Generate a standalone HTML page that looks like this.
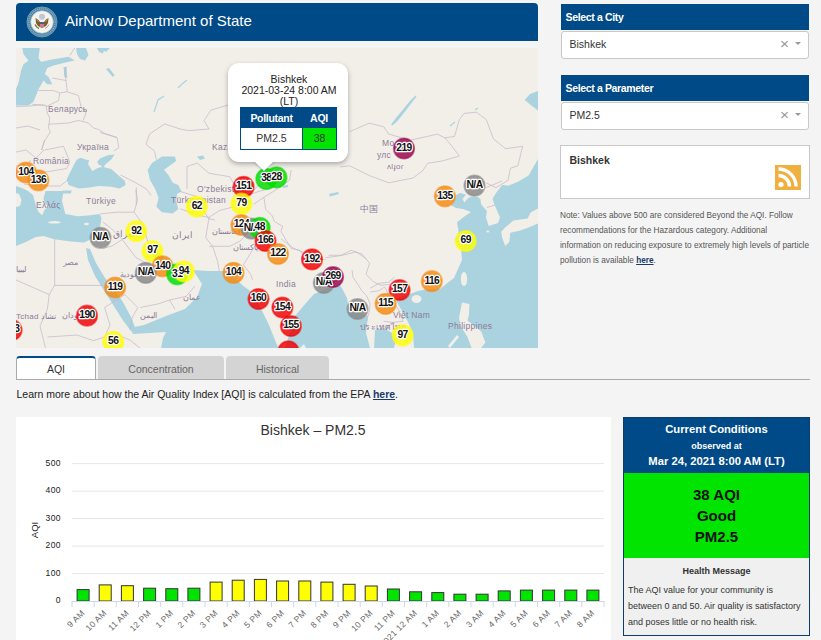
<!DOCTYPE html>
<html><head><meta charset="utf-8">
<style>
*{box-sizing:border-box;margin:0;padding:0}
html,body{width:821px;height:640px;overflow:hidden;background:#f4f4f4;font-family:"Liberation Sans",sans-serif;color:#333}
.abs{position:absolute}
#hdr{left:16px;top:3px;width:522px;height:38px;background:#004a87;border-radius:4px 4px 0 0}
#hdr .t{left:49px;top:9px;font-size:15px;color:#fff;white-space:nowrap;line-height:18px}
#map{left:16px;top:48px;width:522px;height:300px;background:#f2efe9;overflow:hidden}
.sh{left:561px;width:248px;height:26px;background:#004a87;color:#fff;font-weight:bold;font-size:10.5px;line-height:26px;padding-left:4.5px;letter-spacing:-0.35px}
.sel{left:561px;width:248px;height:28px;background:#fff;border:1px solid #c8c8c8;border-radius:3px;font-size:10.5px;line-height:25px;padding-left:7.5px;color:#333}
.sel .x{position:absolute;left:218px;top:-1.5px;color:#999;font-size:15.5px}
.sel .c{position:absolute;left:232.5px;top:10px;width:0;height:0;border-left:3.5px solid transparent;border-right:3.5px solid transparent;border-top:3.5px solid #999}
#cityinfo{left:560px;top:145px;width:250px;height:54px;background:#fff;border:1px solid #c8c8c8}
#note{left:560px;top:207.5px;width:252px;font-size:8.25px;line-height:15px;color:#555}
.tab{top:356px;height:23px;background:#d4d4d4;border-radius:4px 4px 0 0;font-size:10.5px;line-height:26px;text-align:center;color:#666}
#learn{left:16.5px;top:387.5px;font-size:10.5px;color:#222;white-space:nowrap}
#chart{left:16px;top:417px;width:595px;height:223px;background:#fff}
#cond{left:623px;top:417px;width:187px;height:219px;background:#f0f0f0;border:1px solid #0c3d6e}
.mk{font-family:"Liberation Sans",sans-serif;font-weight:bold;font-size:10.3px;fill:#111;letter-spacing:-0.6px;paint-order:stroke;stroke:#fff;stroke-width:2.4px;stroke-linejoin:round}
#popup{left:212px;top:15px;width:120px;height:110px}
.yl{font-family:"Liberation Sans",sans-serif;font-size:8.6px;fill:#222;letter-spacing:0.4px}
.xl{font-family:"Liberation Sans",sans-serif;font-size:8.5px;fill:#666;letter-spacing:0.3px}
</style></head><body>
<div id="hdr" class="abs">
  <svg class="abs" style="left:10px;top:3px" width="32" height="32" viewBox="0 0 32 32">
    <circle cx="16" cy="16" r="15" fill="#4f80b0" stroke="#78aaa4" stroke-width="0.9"/>
    <circle cx="16" cy="16" r="13.2" fill="none" stroke="#8fb4c8" stroke-width="1.2" stroke-dasharray="1.2 0.9"/>
    <circle cx="16" cy="16" r="11.3" fill="#f5f3ee" stroke="#a9c2bc" stroke-width="0.7"/>
    <circle cx="16" cy="10.8" r="3" fill="#b9cad8"/>
    <path d="M9.5,12 L12,13.5 L14,16 L16,16.5 L18,16 L20,13.5 L22.5,12 L22,17 L20,20 L16,22 L12,20 L10,17 Z" fill="#7a5c30"/>
    <path d="M10.5,13 L12.5,16 M21.5,13 L19.5,16" stroke="#c0a060" stroke-width="0.8"/>
    <path d="M9,18.5 Q10.5,21.5 13,22.5" stroke="#5a8a4a" stroke-width="1.5" fill="none"/>
    <path d="M23,18.5 Q21.5,21.5 19,22.5" stroke="#9a9a8a" stroke-width="0.9" fill="none"/>
    <rect x="14" y="16.2" width="4" height="1.8" fill="#3c5c9c"/>
    <path d="M14,18 L18,18 L18,20.5 Q16,22.5 14,20.5 Z" fill="#d77a80"/>
  </svg>
  <div class="abs t">AirNow Department of State</div>
</div>

<div id="map" class="abs"><svg class="abs" style="left:0;top:0" width="522" height="300" viewBox="16 48 522 300"><path d="M22.25,48 L39.75,48 L38.5,58 L41,61.75 L53.5,59.25 L68.5,56.75 L74.75,60.5 L68.5,61.75 L53.5,65.5 L47.25,68 L44.75,74.25 L48.5,76.75 L52.25,84.25 L47.25,84.25 L43.5,80.5 L38.5,89.25 L33.5,101.75 L28.5,105.5 L16,105.5 L16,89.25 L18.5,83 L21,70.5 L23.5,64.25 L28.5,60.5 L23.5,54.25 Z" fill="#aad3df"/>
<path d="M63.5,67 L66.5,66.75 L67.25,78 L64.5,77 Z" fill="#aad3df"/>
<path d="M76,48 L86,48 L88.5,55 L85,60.5 L80,59 L77,54 Z" fill="#aad3df"/>
<path d="M100,48 L110,48 L106,52 Z" fill="#aad3df"/>
<path d="M80.5,157.8 L85.6,159.5 L90,160.5 L96,162 L100,164 L104.3,167.2 L111.2,168.9 L119.7,176.5 L124.8,180.8 L125.6,185 L119.7,188.5 L111.2,186.8 L98.4,185.9 L89.8,187.6 L78.8,188.5 L68.5,185 L66.8,179.1 L71.1,170.6 L74.5,163.8 L77,159.5 Z" fill="#aad3df"/>
<path d="M97,162 L100,158.6 L107.7,155.2 L114.6,154.4 L111.2,159.5 L105.2,164.6 L103.5,167.5 L100,165.5 Z" fill="#aad3df"/>
<path d="M62.8,190.5 L71.6,190.5 L71,193.4 L63,193.4 Z" fill="#aad3df"/>
<path d="M161.9,156.6 L175,156.6 L176,161 L171.7,164.2 L164,169.7 L168.4,175.1 L172.8,182.8 L178.3,185 L181.5,191.5 L177.2,193.7 L176,200.3 L178.3,209 L172.8,213.4 L161.9,212.3 L156.4,206.8 L158.6,198 L155.3,189.3 L149.8,179.5 L147.7,169.7 L152,163.1 L158.6,158.7 Z" fill="#aad3df"/>
<path d="M16,186 L22,188 L28,191 L33,195 L36,206 L38.5,212 L42.3,215.2 L44.5,209.7 L48.9,206.4 L45.6,204 L43.4,198.8 L45.6,191 L63.5,191 L62,201 L65.3,214.1 L77.4,216.3 L90.6,215.2 L99.3,214.1 L101.5,217.4 L100.4,225 L99.3,231.7 L92.8,238.2 L84,242.6 L70.8,241.5 L54.4,239.3 L43.4,236 L35.7,237.1 L27,241.5 L16,246 Z" fill="#aad3df"/>
<path d="M86,248 L90,249 L96,263 L105,278 L116,291 L124,304 L131,317 L135,327 L131,331 L122,319 L112,303 L103,289 L95,276 L88,260 Z" fill="#aad3df"/>
<path d="M150,250 L158,252 L168,262 L178,266 L190,268 L193,272 L186,276 L176,276 L166,272 L156,262 Z" fill="#aad3df"/>
<path d="M193,270 L208,271 L223,271 L236,279 L243.3,285.9 L251.9,292 L261.6,310 L269,325 L276.2,343 L278.7,348 L161,348 L163,338 L166,332 L150,333 L133,334 L130,328 L144,325 L166,316 L185,309 L197,297 L202,284 Z" fill="#aad3df"/>
<path d="M285,348 L290,332 L295,316 L306,303 L314,294 L331,287 L340,285 L344,292 L347,298 L349,309 L360,313 L368,316 L366,333 L370,348 Z" fill="#aad3df"/>
<path d="M375,330 L384,328 L392,333 L396,340 L394,348 L374,348 Z" fill="#aad3df"/>
<path d="M396,300 L403,313 L408,322 L413,333 L414,348 L538,348 L538,159 L528.6,175.5 L518.5,181.6 L508.3,185.7 L502.2,185 L496,193 L492.5,198.7 L494.4,204.4 L500,217.5 L498,223 L488.7,226 L486,217.5 L486.9,211 L481.2,204.4 L480.3,198.7 L477.5,196.9 L472,196.5 L468.1,198 L464.4,202.5 L462.5,199 L466,194.5 L460,193 L455,195.5 L451.2,205.3 L456,208 L463,209 L471,211.9 L465,216 L457,222.2 L458.7,232.5 L455,240 L461,248 L462,260 L454,278 L446,284 L440,289 L428,289 L418,291 L410,294 L398,298 Z" fill="#aad3df"/>
<path d="M97,48 L104.6,48 L103,53.5 L99,52 Z" fill="#aad3df"/>
<path d="M106,69 L109,68 L114.75,75.5 L112.5,76.75 Z" fill="#aad3df"/>
<path d="M197,156.5 L203,155.5 L205,158.5 L200,160 Z" fill="#aad3df"/>
<path d="M329,194 L338,192 L339,194 L330,196.5 Z" fill="#aad3df"/>
<path d="M283,186 L288,185 L288,187 L283,188 Z" fill="#aad3df"/>
<path d="M524.6,100 L530,94 L538,91 L538,110.5 L532,106 Z" fill="#aad3df"/>
<path d="M391,124.5 L396,118 L403,109.5 L410,101 L415.5,95.5 L416.5,96.5 L411.5,103 L405,111.5 L398,120.5 L392.5,125.5 Z" fill="#aad3df"/>
<path d="M538,208.4 L530.6,212.4 L527.6,218.5 L513.4,220.5 L505.2,227.6 L501.2,231.7 L502.2,237.8 L505.2,246 L509.3,241.9 L510.3,232.7 L519.4,230.7 L528.6,227.6 L538,223.6 Z" fill="#f2efe9"/>
<path d="M462,302.6 L469.5,304 L468.9,315 L467.5,320.5 L474.4,326 L481.2,331.5 L485.4,342.5 L481,348 L471.6,348 L467.5,337 L460.6,326 L459,317.7 L460.6,309.5 Z M448,346 L457,335 L459,337 L450,348 Z" fill="#f2efe9"/>
<path d="M300,348 L304,344 L306,348 Z" fill="#f2efe9"/>
<path d="M88,164 L89.5,159.5 L96,160 L98.5,164.5 L102.5,166.6 L96.7,168.6 L92.4,171 Z" fill="#f2efe9"/>
<path d="M16,193 L19,194 L21.5,200 L20,206 L16,207 Z" fill="#f2efe9"/>
<ellipse cx="416.5" cy="299" rx="5" ry="4" fill="#f2efe9"/>
<ellipse cx="464" cy="279" rx="3.2" ry="7" fill="#f2efe9"/>
<ellipse cx="54.4" cy="222.3" rx="6.5" ry="1.3" fill="#f2efe9"/>
<ellipse cx="86.5" cy="224" rx="2.5" ry="1.2" fill="#f2efe9"/>
<ellipse cx="487.8" cy="231.5" rx="1.5" ry="1" fill="#f2efe9"/>
<path d="M154,112 L156,106 L158,100 L164,96" fill="none" stroke="#aad3df" stroke-width="1.2"/>
<path d="M178,88 L182,84 L187,80" fill="none" stroke="#aad3df" stroke-width="1.2"/>
<path d="M450,126 L455,122" fill="none" stroke="#aad3df" stroke-width="1.2"/>
<path d="M475,110 L478,108" fill="none" stroke="#aad3df" stroke-width="1.2"/>
<path d="M74.75,48 L69.75,55.5" fill="none" stroke="#c4b5c6" stroke-width="0.7"/>
<path d="M52.25,78 L66,80.5" fill="none" stroke="#c4b5c6" stroke-width="0.7"/>
<path d="M66,66.75 L64.75,73 L66,80.5" fill="none" stroke="#c4b5c6" stroke-width="0.7"/>
<path d="M38.5,90.5 L53.5,90.5 L59.75,93 L67.25,91.75" fill="none" stroke="#c4b5c6" stroke-width="0.7"/>
<path d="M66,80.5 L67.25,91.75 L78.5,95.5 L81,106.75 L86,113 L83,120.8" fill="none" stroke="#c4b5c6" stroke-width="0.7"/>
<path d="M59.75,93 L58.5,100.5 L46,106.75" fill="none" stroke="#c4b5c6" stroke-width="0.7"/>
<path d="M32.25,104.25 L46,105.5 L47.25,113 L49.75,118 L48.5,128 L50.3,132 L44.3,141.4 L41.7,150" fill="none" stroke="#c4b5c6" stroke-width="0.7"/>
<path d="M48.5,124.25 L68.5,123 L78.5,120.5 L88.5,123 L93.5,128 L98.4,129.4 L104.7,133.5 L117,137.5 L118.8,147.7 L113.6,151.2" fill="none" stroke="#c4b5c6" stroke-width="0.7"/>
<path d="M16,106.6 L30,106 L38,105 L44.5,105" fill="none" stroke="#c4b5c6" stroke-width="0.7"/>
<path d="M16,128 L28,126 L40,130" fill="none" stroke="#c4b5c6" stroke-width="0.7"/>
<path d="M41.7,150 L44.5,140" fill="none" stroke="#c4b5c6" stroke-width="0.7"/>
<path d="M44.5,150 L63.5,146.3 L69.8,162 L66.7,168.5" fill="none" stroke="#c4b5c6" stroke-width="0.7"/>
<path d="M16,152 L26,150 L36,158 L44,150" fill="none" stroke="#c4b5c6" stroke-width="0.7"/>
<path d="M16,166 L24,164" fill="none" stroke="#c4b5c6" stroke-width="0.7"/>
<path d="M16,172 L30,172 L47.7,171.7 L66.7,168.5" fill="none" stroke="#c4b5c6" stroke-width="0.7"/>
<path d="M30,160 L30,172" fill="none" stroke="#c4b5c6" stroke-width="0.7"/>
<path d="M38,186 L60.3,186 L68.3,179.6" fill="none" stroke="#c4b5c6" stroke-width="0.7"/>
<path d="M24,184 L38,186" fill="none" stroke="#c4b5c6" stroke-width="0.7"/>
<path d="M120.5,175 L134.1,181.9 L146,188.7 L151.2,195.5" fill="none" stroke="#c4b5c6" stroke-width="0.7"/>
<path d="M136.3,187.5 L136.3,205" fill="none" stroke="#c4b5c6" stroke-width="0.7"/>
<path d="M100,213.9 L117,212.2 L134.1,212.2" fill="none" stroke="#c4b5c6" stroke-width="0.7"/>
<path d="M135.8,190 L137.5,200.2 L134.1,212.2 L142.6,224.1 L147.7,241.2 L156.3,251.4" fill="none" stroke="#c4b5c6" stroke-width="0.7"/>
<path d="M102.7,222 L110.2,227.5 L122.2,239.5 L136,257.7 L146,263" fill="none" stroke="#c4b5c6" stroke-width="0.7"/>
<path d="M102.7,248.5 L112,246 L122.2,239.5" fill="none" stroke="#c4b5c6" stroke-width="0.7"/>
<path d="M54.7,239 L54.7,285.4 L102.7,285.4" fill="none" stroke="#c4b5c6" stroke-width="0.7"/>
<path d="M16,280 L49.2,294.6 L54.7,285.4" fill="none" stroke="#c4b5c6" stroke-width="0.7"/>
<path d="M49.2,294.6 L47.4,309.3 L40,326 L45.5,348" fill="none" stroke="#c4b5c6" stroke-width="0.7"/>
<path d="M47.4,337 L77,335 L93.5,340.7 L104.6,337" fill="none" stroke="#c4b5c6" stroke-width="0.7"/>
<path d="M104.6,307.5 L124.9,294.6 L137.8,307.5" fill="none" stroke="#c4b5c6" stroke-width="0.7"/>
<path d="M104.6,337 L110,325 L104.6,307.5" fill="none" stroke="#c4b5c6" stroke-width="0.7"/>
<path d="M137.8,307.5 L132,318 L130,330" fill="none" stroke="#c4b5c6" stroke-width="0.7"/>
<path d="M120,336 L130,340 L140,348" fill="none" stroke="#c4b5c6" stroke-width="0.7"/>
<path d="M140,307.5 L158.5,303.8 L169.5,300 L186,296.4" fill="none" stroke="#c4b5c6" stroke-width="0.7"/>
<path d="M169.5,300 L175,309.3" fill="none" stroke="#c4b5c6" stroke-width="0.7"/>
<path d="M186,296.4 L195,286" fill="none" stroke="#c4b5c6" stroke-width="0.7"/>
<path d="M156.3,159.7 L154.6,151.2 L146,144.3 L149.5,134.1 L164.8,123.9 L180.1,129 L188.7,130.7 L209,129 L204,120.5 L210.8,110.2 L227.9,105.1 L232,104" fill="none" stroke="#c4b5c6" stroke-width="0.7"/>
<path d="M100,132.4 L117,137.5" fill="none" stroke="#c4b5c6" stroke-width="0.7"/>
<path d="M187,166.5 L197.2,163.1 L209.1,173.3 L229.6,176.7 L235.6,186" fill="none" stroke="#c4b5c6" stroke-width="0.7"/>
<path d="M187,166.5 L187,188.7" fill="none" stroke="#c4b5c6" stroke-width="0.7"/>
<path d="M179.2,191.2 L196.3,196.3 L208.3,218.5 L215,220" fill="none" stroke="#c4b5c6" stroke-width="0.7"/>
<path d="M180.1,208.8 L198.9,215.6 L209.1,217.3" fill="none" stroke="#c4b5c6" stroke-width="0.7"/>
<path d="M235.6,186 L249,194.6 L259.5,191.2 L280,186" fill="none" stroke="#c4b5c6" stroke-width="0.7"/>
<path d="M249,194.6 L259.5,184.4 L280,182.7" fill="none" stroke="#c4b5c6" stroke-width="0.7"/>
<path d="M209.1,217.3 L205.7,237.7 L212.6,246.3 L217.7,261.6 L219.4,271.9" fill="none" stroke="#c4b5c6" stroke-width="0.7"/>
<path d="M209.1,246.3 L229.6,246.3 L240,241.2" fill="none" stroke="#c4b5c6" stroke-width="0.7"/>
<path d="M209.1,217.3 L219.4,210.5 L233,207" fill="none" stroke="#c4b5c6" stroke-width="0.7"/>
<path d="M240,241.2 L250.7,230 L258,241 L243.3,265 L250.7,274.3 L252.5,279.8" fill="none" stroke="#c4b5c6" stroke-width="0.7"/>
<path d="M291.2,170 L289.5,180.2 L277.5,188.8 L263.9,197.3 L253.6,204.1" fill="none" stroke="#c4b5c6" stroke-width="0.7"/>
<path d="M263.9,197.3 L265.6,209.2 L272.4,216 L274.1,221.2 L282.6,226.3 L281,231.4 L286,240 L291.2,248.4 L299.7,250.2 L304.8,257" fill="none" stroke="#c4b5c6" stroke-width="0.7"/>
<path d="M281,239 L294,248.5 L321.7,259.5 L325.4,259.5" fill="none" stroke="#c4b5c6" stroke-width="0.7"/>
<path d="M304.8,257 L320,258" fill="none" stroke="#c4b5c6" stroke-width="0.7"/>
<path d="M325.4,257.7 L340,255.8 L351,250.3 L362,254 L369.6,263.2 L366,274.3 L373.3,281.7 L380.7,285.4 L395.5,283.5" fill="none" stroke="#c4b5c6" stroke-width="0.7"/>
<path d="M328.7,255.3 L342.3,255.3 L356,251.9 L366.2,258.7" fill="none" stroke="#c4b5c6" stroke-width="0.7"/>
<path d="M352,270 L353,277.3 L358,284.6 L361.7,290.7 L366.5,295.6 L370.2,304.1 L369,312.6 L366.5,321.2" fill="none" stroke="#c4b5c6" stroke-width="0.7"/>
<path d="M370.2,292 L378.7,290.7 L384.8,287 L388.5,294.4 L398.2,309 L403,321.2" fill="none" stroke="#c4b5c6" stroke-width="0.7"/>
<path d="M383.6,321.2 L393.3,322.4 L403,321.2" fill="none" stroke="#c4b5c6" stroke-width="0.7"/>
<path d="M370.2,288.3 L378.7,283.4 L388.5,282.2 L394.6,277.3" fill="none" stroke="#c4b5c6" stroke-width="0.7"/>
<path d="M349.7,131.7 L369.2,123.1 L383.8,126.8 L388.7,134.1 L410.6,140.2 L437.4,134.1 L444.8,137.8 L454.5,136.5" fill="none" stroke="#c4b5c6" stroke-width="0.7"/>
<path d="M340,167 L349.7,165.8 L369.2,175.5 L388.7,182.8 L413,178 L422.8,170.6 L427.7,163.3 L442.3,160.9 L459.4,156 L452,146.3 L444.8,137.8" fill="none" stroke="#c4b5c6" stroke-width="0.7"/>
<path d="M454.5,136.5 L459.4,119.5 L464.2,113.4 L476.4,112.2 L486.2,119.5 L493.5,139 L505.6,148.7 L522.7,146.3 L517.8,165.8 L510.5,168.2 L508,180.4 L495.9,187.7 L486.2,182.8" fill="none" stroke="#c4b5c6" stroke-width="0.7"/>
<path d="M478,190 L486,187.5 L495,184 L502,181" fill="none" stroke="#c4b5c6" stroke-width="0.7"/>
<path d="M487,207.5 L495,205" fill="none" stroke="#c4b5c6" stroke-width="0.7"/>
<text x="48" y="112" font-size="8.5" fill="#8c7b97" font-family="Liberation Sans" letter-spacing="0.3">Беларусь</text>
<text x="77" y="150" font-size="8.5" fill="#8c7b97" font-family="Liberation Sans" letter-spacing="0.3">Україна</text>
<text x="33" y="164" font-size="8.5" fill="#8c7b97" font-family="Liberation Sans" letter-spacing="0.3">România</text>
<text x="86" y="204" font-size="8.5" fill="#8c7b97" font-family="Liberation Sans" letter-spacing="0.3">Türkiye</text>
<text x="36" y="208" font-size="8.5" fill="#8c7b97" font-family="Liberation Sans" letter-spacing="0.3">Ελλάς</text>
<text x="212" y="150" font-size="8.5" fill="#8c7b97" font-family="Liberation Sans" letter-spacing="0.3">Kaza</text>
<text x="197" y="192" font-size="8.5" fill="#8c7b97" font-family="Liberation Sans" letter-spacing="0.3">O'zbekiston</text>
<text x="171" y="203" font-size="8.5" fill="#8c7b97" font-family="Liberation Sans" letter-spacing="0.3">Türkmenistan</text>
<text x="172" y="238" font-size="8.5" fill="#8c7b97" font-family="Liberation Sans" letter-spacing="0.3">ایران</text>
<text x="113" y="237" font-size="8.5" fill="#8c7b97" font-family="Liberation Sans" letter-spacing="0.3">العراق</text>
<text x="63" y="265" font-size="8" fill="#8c7b97" font-family="Liberation Sans" letter-spacing="0.3">مصر</text>
<text x="16" y="272" font-size="8" fill="#8c7b97" font-family="Liberation Sans" letter-spacing="0.3">ليبيا</text>
<text x="62" y="318" font-size="8" fill="#8c7b97" font-family="Liberation Sans" letter-spacing="0.3">السودان</text>
<text x="16" y="319" font-size="8" fill="#8c7b97" font-family="Liberation Sans" letter-spacing="0.3">Tchad تشاد</text>
<text x="140" y="318" font-size="8" fill="#8c7b97" font-family="Liberation Sans" letter-spacing="0.3">اليمن</text>
<text x="183" y="300" font-size="8" fill="#8c7b97" font-family="Liberation Sans" letter-spacing="0.3">عمان</text>
<text x="120" y="277" font-size="8" fill="#8c7b97" font-family="Liberation Sans" letter-spacing="0.3">السعودية</text>
<text x="212" y="234" font-size="8" fill="#8c7b97" font-family="Liberation Sans" letter-spacing="0.3">افغانستان</text>
<text x="233" y="250" font-size="8" fill="#8c7b97" font-family="Liberation Sans" letter-spacing="0.3">پاکستان</text>
<text x="276" y="287" font-size="8.5" fill="#8c7b97" font-family="Liberation Sans" letter-spacing="0.3">India</text>
<text x="359.5" y="212" font-size="8.5" fill="#8c7b97" font-family="Liberation Sans" letter-spacing="0.3">中国</text>
<text x="382" y="146" font-size="8.5" fill="#8c7b97" font-family="Liberation Sans" letter-spacing="0.3">Mo</text>
<text x="377" y="158" font-size="8.5" fill="#8c7b97" font-family="Liberation Sans" letter-spacing="0.3">улс</text>
<text x="387" y="168.5" font-size="8" fill="#8c7b97" font-family="Liberation Sans" letter-spacing="0.3">ʌlɟoɾ</text>
<text x="393" y="318" font-size="8.5" fill="#8c7b97" font-family="Liberation Sans" letter-spacing="0.3">Việt Nam</text>
<text x="360" y="330" font-size="8.5" fill="#8c7b97" font-family="Liberation Sans" letter-spacing="0.3">ประเทศไทย</text>
<text x="448" y="329" font-size="8.5" fill="#8c7b97" font-family="Liberation Sans" letter-spacing="0.3">Philippines</text>
<circle cx="11.6" cy="330" r="10.3" fill="#f00000" fill-opacity="0.82" stroke="#f00000" stroke-opacity="0.55" stroke-width="1.6"/>
<circle cx="26" cy="172.5" r="10.3" fill="#f58a10" fill-opacity="0.82" stroke="#f58a10" stroke-opacity="0.55" stroke-width="1.6"/>
<circle cx="38.4" cy="180.3" r="10.3" fill="#f58a10" fill-opacity="0.82" stroke="#f58a10" stroke-opacity="0.55" stroke-width="1.6"/>
<circle cx="100.5" cy="237.8" r="10.3" fill="#888888" fill-opacity="0.82" stroke="#888888" stroke-opacity="0.55" stroke-width="1.6"/>
<circle cx="136.3" cy="231.2" r="10.3" fill="#ffff00" fill-opacity="0.82" stroke="#ffff00" stroke-opacity="0.55" stroke-width="1.6"/>
<circle cx="115.1" cy="287.5" r="10.3" fill="#f58a10" fill-opacity="0.82" stroke="#f58a10" stroke-opacity="0.55" stroke-width="1.6"/>
<circle cx="87" cy="315.7" r="10.3" fill="#f00000" fill-opacity="0.82" stroke="#f00000" stroke-opacity="0.55" stroke-width="1.6"/>
<circle cx="113.2" cy="341.9" r="10.3" fill="#ffff00" fill-opacity="0.82" stroke="#ffff00" stroke-opacity="0.55" stroke-width="1.6"/>
<circle cx="152.4" cy="251" r="10.3" fill="#ffff00" fill-opacity="0.82" stroke="#ffff00" stroke-opacity="0.55" stroke-width="1.6"/>
<circle cx="162.6" cy="266.3" r="10.3" fill="#f58a10" fill-opacity="0.82" stroke="#f58a10" stroke-opacity="0.55" stroke-width="1.6"/>
<circle cx="145.8" cy="272.9" r="10.3" fill="#888888" fill-opacity="0.82" stroke="#888888" stroke-opacity="0.55" stroke-width="1.6"/>
<circle cx="177.2" cy="274.3" r="10.3" fill="#00dd00" fill-opacity="0.82" stroke="#00dd00" stroke-opacity="0.55" stroke-width="1.6"/>
<circle cx="183.8" cy="271.4" r="10.3" fill="#ffff00" fill-opacity="0.82" stroke="#ffff00" stroke-opacity="0.55" stroke-width="1.6"/>
<circle cx="196.8" cy="206.7" r="10.3" fill="#ffff00" fill-opacity="0.82" stroke="#ffff00" stroke-opacity="0.55" stroke-width="1.6"/>
<circle cx="243.6" cy="186.9" r="10.3" fill="#f00000" fill-opacity="0.82" stroke="#f00000" stroke-opacity="0.55" stroke-width="1.6"/>
<circle cx="241.4" cy="203.7" r="10.3" fill="#ffff00" fill-opacity="0.82" stroke="#ffff00" stroke-opacity="0.55" stroke-width="1.6"/>
<circle cx="266.3" cy="178.9" r="10.3" fill="#00dd00" fill-opacity="0.82" stroke="#00dd00" stroke-opacity="0.55" stroke-width="1.6"/>
<circle cx="276.5" cy="177.4" r="10.3" fill="#00dd00" fill-opacity="0.82" stroke="#00dd00" stroke-opacity="0.55" stroke-width="1.6"/>
<circle cx="241.4" cy="225" r="10.3" fill="#f58a10" fill-opacity="0.82" stroke="#f58a10" stroke-opacity="0.55" stroke-width="1.6"/>
<circle cx="251.6" cy="228.6" r="10.3" fill="#888888" fill-opacity="0.82" stroke="#888888" stroke-opacity="0.55" stroke-width="1.6"/>
<circle cx="259.7" cy="227.9" r="10.3" fill="#00dd00" fill-opacity="0.82" stroke="#00dd00" stroke-opacity="0.55" stroke-width="1.6"/>
<circle cx="265.5" cy="241" r="10.3" fill="#f00000" fill-opacity="0.82" stroke="#f00000" stroke-opacity="0.55" stroke-width="1.6"/>
<circle cx="278" cy="254" r="10.3" fill="#f58a10" fill-opacity="0.82" stroke="#f58a10" stroke-opacity="0.55" stroke-width="1.6"/>
<circle cx="233.5" cy="272.9" r="10.3" fill="#f58a10" fill-opacity="0.82" stroke="#f58a10" stroke-opacity="0.55" stroke-width="1.6"/>
<circle cx="312" cy="259.4" r="10.3" fill="#f00000" fill-opacity="0.82" stroke="#f00000" stroke-opacity="0.55" stroke-width="1.6"/>
<circle cx="323.8" cy="283" r="10.3" fill="#888888" fill-opacity="0.82" stroke="#888888" stroke-opacity="0.55" stroke-width="1.6"/>
<circle cx="333" cy="277" r="10.3" fill="#99004c" fill-opacity="0.82" stroke="#99004c" stroke-opacity="0.55" stroke-width="1.6"/>
<circle cx="258.5" cy="299" r="10.3" fill="#f00000" fill-opacity="0.82" stroke="#f00000" stroke-opacity="0.55" stroke-width="1.6"/>
<circle cx="282.4" cy="307.5" r="10.3" fill="#f00000" fill-opacity="0.82" stroke="#f00000" stroke-opacity="0.55" stroke-width="1.6"/>
<circle cx="290.9" cy="326" r="10.3" fill="#f00000" fill-opacity="0.82" stroke="#f00000" stroke-opacity="0.55" stroke-width="1.6"/>
<circle cx="288.4" cy="351.4" r="10.3" fill="#f00000" fill-opacity="0.82" stroke="#f00000" stroke-opacity="0.55" stroke-width="1.6"/>
<circle cx="404" cy="148.5" r="10.3" fill="#99004c" fill-opacity="0.82" stroke="#99004c" stroke-opacity="0.55" stroke-width="1.6"/>
<circle cx="474.5" cy="185.6" r="10.3" fill="#888888" fill-opacity="0.82" stroke="#888888" stroke-opacity="0.55" stroke-width="1.6"/>
<circle cx="444.9" cy="196.3" r="10.3" fill="#f58a10" fill-opacity="0.82" stroke="#f58a10" stroke-opacity="0.55" stroke-width="1.6"/>
<circle cx="465.7" cy="241" r="10.3" fill="#ffff00" fill-opacity="0.82" stroke="#ffff00" stroke-opacity="0.55" stroke-width="1.6"/>
<circle cx="399.6" cy="290" r="10.3" fill="#f00000" fill-opacity="0.82" stroke="#f00000" stroke-opacity="0.55" stroke-width="1.6"/>
<circle cx="431.8" cy="281.2" r="10.3" fill="#f58a10" fill-opacity="0.82" stroke="#f58a10" stroke-opacity="0.55" stroke-width="1.6"/>
<circle cx="385.6" cy="303.9" r="10.3" fill="#f58a10" fill-opacity="0.82" stroke="#f58a10" stroke-opacity="0.55" stroke-width="1.6"/>
<circle cx="357.5" cy="309" r="10.3" fill="#888888" fill-opacity="0.82" stroke="#888888" stroke-opacity="0.55" stroke-width="1.6"/>
<circle cx="402.6" cy="335.3" r="10.3" fill="#ffff00" fill-opacity="0.82" stroke="#ffff00" stroke-opacity="0.55" stroke-width="1.6"/>
<text x="11.6" y="332.4" text-anchor="middle" class="mk">183</text>
<text x="26" y="174.9" text-anchor="middle" class="mk">104</text>
<text x="38.4" y="182.70000000000002" text-anchor="middle" class="mk">136</text>
<text x="100.5" y="240.20000000000002" text-anchor="middle" class="mk">N/A</text>
<text x="136.3" y="233.6" text-anchor="middle" class="mk">92</text>
<text x="115.1" y="289.9" text-anchor="middle" class="mk">119</text>
<text x="87" y="318.09999999999997" text-anchor="middle" class="mk">190</text>
<text x="113.2" y="344.29999999999995" text-anchor="middle" class="mk">56</text>
<text x="152.4" y="253.4" text-anchor="middle" class="mk">97</text>
<text x="162.6" y="268.7" text-anchor="middle" class="mk">140</text>
<text x="145.8" y="275.29999999999995" text-anchor="middle" class="mk">N/A</text>
<text x="177.2" y="276.7" text-anchor="middle" class="mk">31</text>
<text x="183.8" y="273.79999999999995" text-anchor="middle" class="mk">94</text>
<text x="196.8" y="209.1" text-anchor="middle" class="mk">62</text>
<text x="243.6" y="189.3" text-anchor="middle" class="mk">151</text>
<text x="241.4" y="206.1" text-anchor="middle" class="mk">79</text>
<text x="266.3" y="181.3" text-anchor="middle" class="mk">38</text>
<text x="276.5" y="179.8" text-anchor="middle" class="mk">28</text>
<text x="241.4" y="227.4" text-anchor="middle" class="mk">124</text>
<text x="251.6" y="231.0" text-anchor="middle" class="mk">N/A</text>
<text x="259.7" y="230.3" text-anchor="middle" class="mk">48</text>
<text x="265.5" y="243.4" text-anchor="middle" class="mk">166</text>
<text x="278" y="256.4" text-anchor="middle" class="mk">122</text>
<text x="233.5" y="275.29999999999995" text-anchor="middle" class="mk">104</text>
<text x="312" y="261.79999999999995" text-anchor="middle" class="mk">192</text>
<text x="323.8" y="285.4" text-anchor="middle" class="mk">N/A</text>
<text x="333" y="279.4" text-anchor="middle" class="mk">269</text>
<text x="258.5" y="301.4" text-anchor="middle" class="mk">160</text>
<text x="282.4" y="309.9" text-anchor="middle" class="mk">154</text>
<text x="290.9" y="328.4" text-anchor="middle" class="mk">155</text>
<text x="404" y="150.9" text-anchor="middle" class="mk">219</text>
<text x="474.5" y="188.0" text-anchor="middle" class="mk">N/A</text>
<text x="444.9" y="198.70000000000002" text-anchor="middle" class="mk">135</text>
<text x="465.7" y="243.4" text-anchor="middle" class="mk">69</text>
<text x="399.6" y="292.4" text-anchor="middle" class="mk">157</text>
<text x="431.8" y="283.59999999999997" text-anchor="middle" class="mk">116</text>
<text x="385.6" y="306.29999999999995" text-anchor="middle" class="mk">115</text>
<text x="357.5" y="311.4" text-anchor="middle" class="mk">N/A</text>
<text x="402.6" y="337.7" text-anchor="middle" class="mk">97</text></svg><div class="abs" id="popup">
<div class="abs" style="left:0;top:0;width:120px;height:99px;background:#fff;border-radius:11px;box-shadow:0 2px 5px rgba(0,0,0,0.3)"></div>
<svg class="abs" style="left:23.75px;top:98px;overflow:visible" width="24" height="12"><path d="M2,0 L12,10 L22,0 Z" fill="#fff" style="filter:drop-shadow(0 1px 1px rgba(0,0,0,0.25))"/><rect x="0" y="-3" width="24" height="3" fill="#fff"/></svg>
<div class="abs" style="left:1px;top:11px;width:120px;text-align:center;font-size:10.5px;line-height:11px;color:#222">Bishkek<br>2021-03-24 8:00 AM<br>(LT)</div>
<div class="abs" style="left:12px;top:44px;width:97px;height:43px;border:1px solid #004a87;background:#fff">
 <div class="abs" style="left:0;top:0;width:95px;height:20px;background:#004a87"></div>
 <div class="abs" style="left:0;top:0;width:61px;line-height:20px;text-align:center;color:#fff;font-weight:bold;font-size:10.5px;letter-spacing:-0.3px">Pollutant</div>
 <div class="abs" style="left:61px;top:0;width:34px;line-height:20px;text-align:center;color:#fff;font-weight:bold;font-size:10.5px;letter-spacing:-0.3px">AQI</div>
 <div class="abs" style="left:0;top:20px;width:61px;line-height:21px;text-align:center;color:#333;font-size:10.5px">PM2.5</div>
 <div class="abs" style="left:61px;top:20px;width:34px;height:21px;background:#00e400;border-left:1px solid #004a87;line-height:21px;text-align:center;color:#333;font-size:10.5px">38</div>
</div>
</div></div>

<div class="abs sh" style="top:4px">Select a City</div>
<div class="abs sel" style="top:31px">Bishkek<span class="x">×</span><span class="c"></span></div>
<div class="abs sh" style="top:75px">Select a Parameter</div>
<div class="abs sel" style="top:102px">PM2.5<span class="x">×</span><span class="c"></span></div>

<div id="cityinfo" class="abs">
  <div class="abs" style="left:8.5px;top:8px;font-weight:bold;font-size:10.5px;color:#333">Bishkek</div>
  <svg class="abs" style="left:214px;top:19px" width="26" height="25" viewBox="0 0 26 25">
    <rect width="26" height="25" fill="#f0b040"/>
    <circle cx="6" cy="19.5" r="2.6" fill="#fff"/>
    <path d="M3.5,10.5 A11,11 0 0 1 14.5,21.5" stroke="#fff" stroke-width="3.4" fill="none"/>
    <path d="M3.5,4 A17.5,17.5 0 0 1 21,21.5" stroke="#fff" stroke-width="3.4" fill="none"/>
  </svg>
</div>
<div id="note" class="abs" style="white-space:nowrap">Note: Values above 500 are considered Beyond the AQI. Follow<br>recommendations for the Hazardous category. Additional<br>information on reducing exposure to extremely high levels of particle<br>pollution is available <b style="color:#1a3a6a;text-decoration:underline">here</b>.</div>

<div class="abs tab" style="left:16px;width:80px;background:#fff;border:1px solid #aaa;border-top:2px solid #004a87;border-bottom:none;color:#333;line-height:22px">AQI</div>
<div class="abs tab" style="left:98px;width:126px">Concentration</div>
<div class="abs tab" style="left:226px;width:103px">Historical</div>
<div class="abs" style="left:16px;top:379px;width:794px;height:1px;background:#aaa"></div>
<div id="learn" class="abs">Learn more about how the Air Quality Index [AQI] is calculated from the EPA <b style="color:#1a3a6a;text-decoration:underline">here</b>.</div>

<div class="abs" style="left:16px;top:417px;width:595px;height:223px;background:#fff"></div>
<svg class="abs" style="left:0;top:0" width="821" height="640" viewBox="0 0 821 640"><text x="61" y="603.3" text-anchor="end" class="yl">0</text>
<line x1="72" x2="604" y1="573.6" y2="573.6" stroke="#e6e6e6" stroke-width="1"/>
<text x="61" y="575.8" text-anchor="end" class="yl">100</text>
<line x1="72" x2="604" y1="546.1" y2="546.1" stroke="#e6e6e6" stroke-width="1"/>
<text x="61" y="548.3" text-anchor="end" class="yl">200</text>
<line x1="72" x2="604" y1="518.6" y2="518.6" stroke="#e6e6e6" stroke-width="1"/>
<text x="61" y="520.8" text-anchor="end" class="yl">300</text>
<line x1="72" x2="604" y1="491.1" y2="491.1" stroke="#e6e6e6" stroke-width="1"/>
<text x="61" y="493.3" text-anchor="end" class="yl">400</text>
<line x1="72" x2="604" y1="463.6" y2="463.6" stroke="#e6e6e6" stroke-width="1"/>
<text x="61" y="465.8" text-anchor="end" class="yl">500</text>
<rect x="77.1" y="589.6" width="12" height="11.4" fill="#00e400" stroke="#333" stroke-width="1"/>
<rect x="99.2" y="584.9" width="12" height="16.1" fill="#ffff00" stroke="#333" stroke-width="1"/>
<rect x="121.4" y="585.7" width="12" height="15.3" fill="#ffff00" stroke="#333" stroke-width="1"/>
<rect x="143.6" y="588.2" width="12" height="12.8" fill="#00e400" stroke="#333" stroke-width="1"/>
<rect x="165.8" y="588.7" width="12" height="12.3" fill="#00e400" stroke="#333" stroke-width="1"/>
<rect x="187.9" y="588.2" width="12" height="12.8" fill="#00e400" stroke="#333" stroke-width="1"/>
<rect x="210.1" y="582.1" width="12" height="18.9" fill="#ffff00" stroke="#333" stroke-width="1"/>
<rect x="232.2" y="580.2" width="12" height="20.8" fill="#ffff00" stroke="#333" stroke-width="1"/>
<rect x="254.4" y="579.4" width="12" height="21.6" fill="#ffff00" stroke="#333" stroke-width="1"/>
<rect x="276.6" y="581.0" width="12" height="20.0" fill="#ffff00" stroke="#333" stroke-width="1"/>
<rect x="298.8" y="581.0" width="12" height="20.0" fill="#ffff00" stroke="#333" stroke-width="1"/>
<rect x="320.9" y="582.1" width="12" height="18.9" fill="#ffff00" stroke="#333" stroke-width="1"/>
<rect x="343.1" y="584.3" width="12" height="16.7" fill="#ffff00" stroke="#333" stroke-width="1"/>
<rect x="365.2" y="586.0" width="12" height="15.0" fill="#ffff00" stroke="#333" stroke-width="1"/>
<rect x="387.4" y="589.0" width="12" height="12.0" fill="#00e400" stroke="#333" stroke-width="1"/>
<rect x="409.6" y="591.8" width="12" height="9.2" fill="#00e400" stroke="#333" stroke-width="1"/>
<rect x="431.8" y="592.6" width="12" height="8.4" fill="#00e400" stroke="#333" stroke-width="1"/>
<rect x="453.9" y="594.2" width="12" height="6.8" fill="#00e400" stroke="#333" stroke-width="1"/>
<rect x="476.1" y="594.2" width="12" height="6.8" fill="#00e400" stroke="#333" stroke-width="1"/>
<rect x="498.2" y="590.9" width="12" height="10.1" fill="#00e400" stroke="#333" stroke-width="1"/>
<rect x="520.4" y="590.1" width="12" height="10.9" fill="#00e400" stroke="#333" stroke-width="1"/>
<rect x="542.6" y="590.1" width="12" height="10.9" fill="#00e400" stroke="#333" stroke-width="1"/>
<rect x="564.8" y="590.1" width="12" height="10.9" fill="#00e400" stroke="#333" stroke-width="1"/>
<rect x="586.9" y="590.1" width="12" height="10.9" fill="#00e400" stroke="#333" stroke-width="1"/>
<line x1="72" x2="604" y1="601.5" y2="601.5" stroke="#ccd6eb" stroke-width="1"/>
<line x1="72.0" x2="72.0" y1="601" y2="607" stroke="#ccd6eb" stroke-width="1"/>
<line x1="94.2" x2="94.2" y1="601" y2="607" stroke="#ccd6eb" stroke-width="1"/>
<line x1="116.3" x2="116.3" y1="601" y2="607" stroke="#ccd6eb" stroke-width="1"/>
<line x1="138.5" x2="138.5" y1="601" y2="607" stroke="#ccd6eb" stroke-width="1"/>
<line x1="160.7" x2="160.7" y1="601" y2="607" stroke="#ccd6eb" stroke-width="1"/>
<line x1="182.8" x2="182.8" y1="601" y2="607" stroke="#ccd6eb" stroke-width="1"/>
<line x1="205.0" x2="205.0" y1="601" y2="607" stroke="#ccd6eb" stroke-width="1"/>
<line x1="227.2" x2="227.2" y1="601" y2="607" stroke="#ccd6eb" stroke-width="1"/>
<line x1="249.3" x2="249.3" y1="601" y2="607" stroke="#ccd6eb" stroke-width="1"/>
<line x1="271.5" x2="271.5" y1="601" y2="607" stroke="#ccd6eb" stroke-width="1"/>
<line x1="293.7" x2="293.7" y1="601" y2="607" stroke="#ccd6eb" stroke-width="1"/>
<line x1="315.8" x2="315.8" y1="601" y2="607" stroke="#ccd6eb" stroke-width="1"/>
<line x1="338.0" x2="338.0" y1="601" y2="607" stroke="#ccd6eb" stroke-width="1"/>
<line x1="360.2" x2="360.2" y1="601" y2="607" stroke="#ccd6eb" stroke-width="1"/>
<line x1="382.3" x2="382.3" y1="601" y2="607" stroke="#ccd6eb" stroke-width="1"/>
<line x1="404.5" x2="404.5" y1="601" y2="607" stroke="#ccd6eb" stroke-width="1"/>
<line x1="426.7" x2="426.7" y1="601" y2="607" stroke="#ccd6eb" stroke-width="1"/>
<line x1="448.8" x2="448.8" y1="601" y2="607" stroke="#ccd6eb" stroke-width="1"/>
<line x1="471.0" x2="471.0" y1="601" y2="607" stroke="#ccd6eb" stroke-width="1"/>
<line x1="493.2" x2="493.2" y1="601" y2="607" stroke="#ccd6eb" stroke-width="1"/>
<line x1="515.3" x2="515.3" y1="601" y2="607" stroke="#ccd6eb" stroke-width="1"/>
<line x1="537.5" x2="537.5" y1="601" y2="607" stroke="#ccd6eb" stroke-width="1"/>
<line x1="559.7" x2="559.7" y1="601" y2="607" stroke="#ccd6eb" stroke-width="1"/>
<line x1="581.8" x2="581.8" y1="601" y2="607" stroke="#ccd6eb" stroke-width="1"/>
<line x1="604.0" x2="604.0" y1="601" y2="607" stroke="#ccd6eb" stroke-width="1"/>
<text transform="translate(85.1,613.5) rotate(-45)" text-anchor="end" class="xl">9 AM</text>
<text transform="translate(107.2,613.5) rotate(-45)" text-anchor="end" class="xl">10 AM</text>
<text transform="translate(129.4,613.5) rotate(-45)" text-anchor="end" class="xl">11 AM</text>
<text transform="translate(151.6,613.5) rotate(-45)" text-anchor="end" class="xl">12 PM</text>
<text transform="translate(173.8,613.5) rotate(-45)" text-anchor="end" class="xl">1 PM</text>
<text transform="translate(195.9,613.5) rotate(-45)" text-anchor="end" class="xl">2 PM</text>
<text transform="translate(218.1,613.5) rotate(-45)" text-anchor="end" class="xl">3 PM</text>
<text transform="translate(240.2,613.5) rotate(-45)" text-anchor="end" class="xl">4 PM</text>
<text transform="translate(262.4,613.5) rotate(-45)" text-anchor="end" class="xl">5 PM</text>
<text transform="translate(284.6,613.5) rotate(-45)" text-anchor="end" class="xl">6 PM</text>
<text transform="translate(306.8,613.5) rotate(-45)" text-anchor="end" class="xl">7 PM</text>
<text transform="translate(328.9,613.5) rotate(-45)" text-anchor="end" class="xl">8 PM</text>
<text transform="translate(351.1,613.5) rotate(-45)" text-anchor="end" class="xl">9 PM</text>
<text transform="translate(373.2,613.5) rotate(-45)" text-anchor="end" class="xl">10 PM</text>
<text transform="translate(395.4,613.5) rotate(-45)" text-anchor="end" class="xl">11 PM</text>
<text transform="translate(417.6,613.5) rotate(-45)" text-anchor="end" class="xl">2021 12 AM</text>
<text transform="translate(439.8,613.5) rotate(-45)" text-anchor="end" class="xl">1 AM</text>
<text transform="translate(461.9,613.5) rotate(-45)" text-anchor="end" class="xl">2 AM</text>
<text transform="translate(484.1,613.5) rotate(-45)" text-anchor="end" class="xl">3 AM</text>
<text transform="translate(506.2,613.5) rotate(-45)" text-anchor="end" class="xl">4 AM</text>
<text transform="translate(528.4,613.5) rotate(-45)" text-anchor="end" class="xl">5 AM</text>
<text transform="translate(550.6,613.5) rotate(-45)" text-anchor="end" class="xl">6 AM</text>
<text transform="translate(572.8,613.5) rotate(-45)" text-anchor="end" class="xl">7 AM</text>
<text transform="translate(594.9,613.5) rotate(-45)" text-anchor="end" class="xl">8 AM</text>
<text x="313" y="435" text-anchor="middle" font-size="14" fill="#333" font-family="Liberation Sans">Bishkek – PM2.5</text>
<text transform="translate(38,530) rotate(-90)" text-anchor="middle" font-size="9.5" fill="#222" font-family="Liberation Sans">AQI</text></svg>

<div id="cond" class="abs">
  <div class="abs" style="left:0;top:0;width:185px;height:55px;background:#004a87;color:#fff;text-align:center;font-weight:bold">
    <div style="font-size:11.25px;line-height:12px;padding-top:5px">Current Conditions</div>
    <div style="font-size:9px;line-height:12px;padding-top:5px">observed at</div>
    <div style="font-size:11.25px;line-height:12px;padding-top:3px">Mar 24, 2021 8:00 AM (LT)</div>
  </div>
  <div class="abs" style="left:0;top:55px;width:185px;height:85px;background:#00e400;color:#111;text-align:center;font-weight:bold;font-size:15px;line-height:21px;padding-top:11px">38 AQI<br>Good<br>PM2.5</div>
  <div class="abs" style="left:0;top:148px;width:185px;text-align:center;font-weight:bold;font-size:9px;color:#333">Health Message</div>
  <div class="abs" style="left:4px;top:164px;width:180px;font-size:9px;line-height:16px;color:#333">The AQI value for your community is between 0 and 50. Air quality is satisfactory and poses little or no health risk.</div>
</div>
</body></html>
